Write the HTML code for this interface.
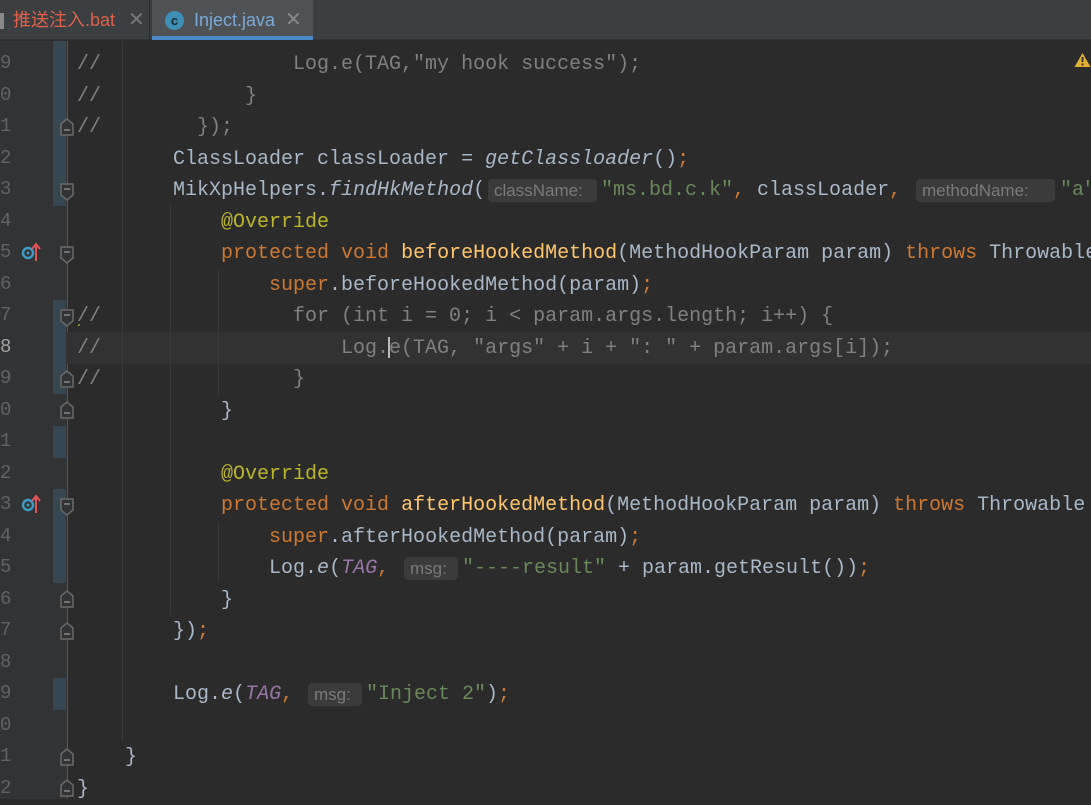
<!DOCTYPE html>
<html><head><meta charset="utf-8"><style>
*{margin:0;padding:0;box-sizing:border-box}
body{width:1091px;height:799px;overflow:hidden;background:#2b2b2b;position:relative;font-family:"Liberation Mono",monospace;font-size:20px}
#tabs{position:absolute;left:0;top:0;width:1091px;height:40px;background:#3c3f41;border-bottom:1px solid #323232;font-family:"Liberation Sans","Noto Sans CJK SC",sans-serif;font-size:18px;z-index:5}
.tab{position:absolute;top:0;height:40px;line-height:40px}
#gut{position:absolute;left:0;top:41px;width:67px;height:758px;background:#313335}
.ln{position:absolute;left:0;width:14px;height:31.5px;line-height:31.5px;color:#606366;font-size:19px}
.l{position:absolute;left:77px;height:31.5px;line-height:31.5px;white-space:pre;color:#a9b7c6;top:0}
.c{color:#808080}.k{color:#cc7832}.s{color:#6a8759}.m{color:#ffc66d}.a{color:#bbb529}.f{color:#9876aa;font-style:italic}.i{font-style:italic}
.h{position:absolute;top:5px;height:23px;line-height:23px;background:#3b3b3b;color:#7a7a7a;border-radius:4px;font-family:"Liberation Sans",sans-serif;font-size:17px;padding:0 6px;text-align:left}
.chg{position:absolute;left:53px;width:13px;background:#374752}
.g{position:absolute;width:1px;background:#3b3b3b}
</style></head><body>
<div id="tabs">
 <div class="tab" style="left:0;width:150px;border-right:1px solid #2b2b2b"><span style="position:absolute;left:0;top:13px;width:4px;height:16px;background:#888"></span><span style="position:absolute;left:13px;color:#e0604a">推送注入.bat</span><span style="position:absolute;left:128px;color:#777;font-size:20px">✕</span></div>
 <div class="tab" style="left:152px;width:161px;background:#4e5254"><span style="position:absolute;left:13px;top:11px;width:19px;height:19px;border-radius:50%;background:#3d8fb6;color:#1e2a30;font-size:13px;line-height:19px;text-align:center;font-weight:bold">c</span><span style="position:absolute;left:42px;color:#7aa8d8">Inject.java</span><span style="position:absolute;left:133px;color:#888;font-size:20px">✕</span><span style="position:absolute;left:0;bottom:0;width:161px;height:4px;background:#4a88c7"></span></div>
</div>
<div id="gut"></div>
<div style="position:absolute;left:67px;top:41px;width:1px;height:758px;background:#555"></div>
<div style="position:absolute;left:67px;top:332px;width:1024px;height:31.5px;background:#323232"></div>
<div class="chg" style="top:41px;height:165px"></div>
<div class="chg" style="top:300px;height:94px"></div>
<div class="chg" style="top:426px;height:32px"></div>
<div class="chg" style="top:489px;height:94px"></div>
<div class="chg" style="top:678px;height:32px"></div>
<div class="g" style="left:122px;top:41px;height:700px"></div>
<div class="g" style="left:170px;top:205px;height:410px"></div>
<div class="g" style="left:218px;top:270px;height:125px"></div>
<div class="g" style="left:218px;top:522px;height:60px"></div>
<div class="ln" style="top:48px">9</div><div class="ln" style="top:79.5px">0</div><div class="ln" style="top:111px">1</div><div class="ln" style="top:142.5px">2</div><div class="ln" style="top:174px">3</div><div class="ln" style="top:205.5px">4</div><div class="ln" style="top:237px">5</div><div class="ln" style="top:268.5px">6</div><div class="ln" style="top:300px">7</div><div class="ln" style="top:331.5px;color:#a4a3a3">8</div><div class="ln" style="top:363px">9</div><div class="ln" style="top:394.5px">0</div><div class="ln" style="top:426px">1</div><div class="ln" style="top:457.5px">2</div><div class="ln" style="top:489px">3</div><div class="ln" style="top:520.5px">4</div><div class="ln" style="top:552px">5</div><div class="ln" style="top:583.5px">6</div><div class="ln" style="top:615px">7</div><div class="ln" style="top:646.5px">8</div><div class="ln" style="top:678px">9</div><div class="ln" style="top:709.5px">0</div><div class="ln" style="top:741px">1</div><div class="ln" style="top:772.5px">2</div>
<svg style="position:absolute;left:0;top:0" width="80" height="799">
<g fill="#313335" stroke="#6a6a6a" stroke-width="1.5">
<path d="M61 135 L61 124 L67 119 L73 124 L73 135Z"/><path d="M61 387 L61 376 L67 371 L73 376 L73 387Z"/><path d="M61 418 L61 407 L67 402 L73 407 L73 418Z"/><path d="M61 607 L61 596 L67 591 L73 596 L73 607Z"/><path d="M61 639 L61 628 L67 623 L73 628 L73 639Z"/><path d="M61 765 L61 754 L67 749 L73 754 L73 765Z"/><path d="M61 796 L61 785 L67 780 L73 785 L73 796Z"/>
<path d="M61 184 L61 195 L67 200 L73 195 L73 184Z"/><path d="M61 247 L61 258 L67 263 L73 258 L73 247Z"/><path d="M61 310 L61 321 L67 326 L73 321 L73 310Z"/><path d="M61 499 L61 510 L67 515 L73 510 L73 499Z"/>
</g>
<g stroke="#888" stroke-width="1.5"><path d="M64 130h6M64 382h6M64 413h6M64 602h6M64 634h6M64 760h6M64 791h6M64 189h6M64 252h6M64 315h6M64 504h6"/></g>
<g><circle cx="28" cy="253" r="5" fill="none" stroke="#3d9bc4" stroke-width="2.5"/><circle cx="28" cy="253" r="1.5" fill="#3d9bc4"/><path d="M36 261V245M32 249l4-5 4 5" stroke="#e05555" stroke-width="2" fill="none"/>
<circle cx="28" cy="505" r="5" fill="none" stroke="#3d9bc4" stroke-width="2.5"/><circle cx="28" cy="505" r="1.5" fill="#3d9bc4"/><path d="M36 513V497M32 501l4-5 4 5" stroke="#e05555" stroke-width="2" fill="none"/></g>
<path d="M78 326 q2 -3 4 0 t4 0 t4 0 t4 0 t4 0" stroke="#bbb529" fill="none" stroke-width="1"/>
</svg>
<svg style="position:absolute;left:1074px;top:52px" width="17" height="16"><path d="M8.5 1L16.5 15H0.5Z" fill="#e0b030"/><path d="M8.5 5v5M8.5 11.5v2" stroke="#2b2b2b" stroke-width="1.8"/></svg>
<div class="l c" style="top:49px">//                Log.e(TAG,"my hook success");</div>
<div class="l c" style="top:80.5px">//            }</div>
<div class="l c" style="top:112px">//        });</div>
<div class="l" style="top:143.5px">        ClassLoader classLoader = <span class="i">getClassloader</span>()<span class="k">;</span></div>
<div class="l" style="top:175px">        MikXpHelpers.<span class="i">findHkMethod</span>(</div>
<div class="h" style="left:488px;top:179px;width:109px">className:</div>
<div class="l" style="left:601px;top:175px"><span class="s">"ms.bd.c.k"</span><span class="k">,</span> classLoader<span class="k">,</span></div>
<div class="h" style="left:916px;top:179px;width:139px">methodName:</div>
<div class="l" style="left:1060px;top:175px"><span class="s">"a"</span></div>
<div class="l" style="top:206.5px">            <span class="a">@Override</span></div>
<div class="l" style="top:238px">            <span class="k">protected void </span><span class="m">beforeHookedMethod</span>(MethodHookParam param) <span class="k">throws </span>Throwable</div>
<div class="l" style="top:269.5px">                <span class="k">super</span>.beforeHookedMethod(param)<span class="k">;</span></div>
<div class="l c" style="top:301px">//                for (int i = 0; i &lt; param.args.length; i++) {</div>
<div class="l c" style="top:332.5px">//                    Log.e(TAG, "args" + i + ": " + param.args[i]);</div>
<div style="position:absolute;left:388px;top:337px;width:2px;height:21px;background:#bbb"></div>
<div class="l c" style="top:364px">//                }</div>
<div class="l" style="top:395.5px">            }</div>
<div class="l" style="top:458.5px">            <span class="a">@Override</span></div>
<div class="l" style="top:490px">            <span class="k">protected void </span><span class="m">afterHookedMethod</span>(MethodHookParam param) <span class="k">throws </span>Throwable</div>
<div class="l" style="top:521.5px">                <span class="k">super</span>.afterHookedMethod(param)<span class="k">;</span></div>
<div class="l" style="top:553px">                Log.<span class="i">e</span>(<span class="f">TAG</span><span class="k">,</span></div>
<div class="h" style="left:404px;top:557px;width:54px">msg:</div>
<div class="l" style="left:462px;top:553px"><span class="s">"----result"</span> + param.getResult())<span class="k">;</span></div>
<div class="l" style="top:584.5px">            }</div>
<div class="l" style="top:616px">        })<span class="k">;</span></div>
<div class="l" style="top:679px">        Log.<span class="i">e</span>(<span class="f">TAG</span><span class="k">,</span></div>
<div class="h" style="left:308px;top:683px;width:54px">msg:</div>
<div class="l" style="left:366px;top:679px"><span class="s">"Inject 2"</span>)<span class="k">;</span></div>
<div class="l" style="top:742px">    }</div>
<div class="l" style="top:773.5px">}</div>
</body></html>
